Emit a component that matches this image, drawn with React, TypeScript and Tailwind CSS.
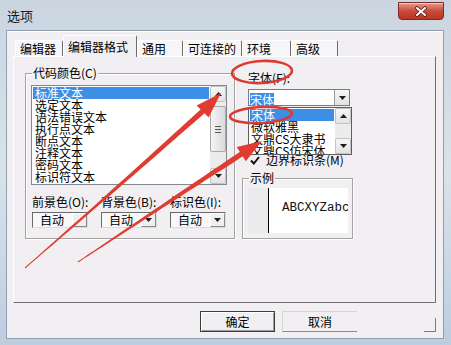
import React from "react";

type Pt = [number, number];

const BODY_BG = "bg-[#f1eff2]";

// tapered pen-drawn arrow: quadratic shaft from tail to head base, then a triangle head
function arrow(p0: Pt, c: Pt, base: Pt, tip: Pt, w0: number, w1: number, hw: number) {
  const n = 30;
  const left: Pt[] = [];
  const right: Pt[] = [];
  for (let i = 0; i <= n; i++) {
    const t = i / n;
    const x = (1 - t) * (1 - t) * p0[0] + 2 * (1 - t) * t * c[0] + t * t * base[0];
    const y = (1 - t) * (1 - t) * p0[1] + 2 * (1 - t) * t * c[1] + t * t * base[1];
    const dx = 2 * (1 - t) * (c[0] - p0[0]) + 2 * t * (base[0] - c[0]);
    const dy = 2 * (1 - t) * (c[1] - p0[1]) + 2 * t * (base[1] - c[1]);
    const len = Math.hypot(dx, dy);
    const w = (w0 + (w1 - w0) * t) / 2;
    left.push([x - (dy / len) * w, y + (dx / len) * w]);
    right.push([x + (dy / len) * w, y - (dx / len) * w]);
  }
  const hx = tip[0] - base[0];
  const hy = tip[1] - base[1];
  const hl = Math.hypot(hx, hy);
  const nx = -hy / hl;
  const ny = hx / hl;
  const back: Pt = [base[0] - (hx / hl) * 2, base[1] - (hy / hl) * 2];
  const head: Pt[] = [
    [back[0] + nx * hw, back[1] + ny * hw],
    tip,
    [back[0] - nx * hw, back[1] - ny * hw],
  ];
  const fmt = (ps: Pt[]) => ps.map((p) => `${p[0].toFixed(1)},${p[1].toFixed(1)}`).join(" ");
  return { shaft: fmt([...left, ...right.reverse()]), head: fmt(head) };
}

const arrow1 = arrow([25, 268], [126, 180], [204, 110], [221, 93], 1, 5.5, 8.5);
const arrow2 = arrow([78, 262], [161, 207], [243, 153], [262, 141], 1, 5.5, 8.5);

const tabs = [
  { label: "编辑器", w: "w-[48px]" },
  { label: "编辑器格式", w: "w-[74px]", active: true },
  { label: "通用", w: "w-[46px]" },
  { label: "可连接的", w: "w-[59px]" },
  { label: "环境", w: "w-[49px]" },
  { label: "高级", w: "w-[47px]" },
];

const items = ["标准文本", "选定文本", "语法错误文本", "执行点文本", "断点文本", "注释文本", "密码文本", "标识符文本"];
const fonts = ["宋体", "微软雅黑", "文鼎CS大隶书", "文鼎CS仿宋体"];

function Tri({ up }: { up?: boolean }) {
  return (
    <svg width="7" height="4" viewBox="0 0 7 4">
      <path d={up ? "M0 4h7L3.5 0z" : "M0 0h7L3.5 4z"} fill="#1e1e1e" />
    </svg>
  );
}

function ScrollBtn({ up }: { up?: boolean }) {
  return (
    <div className="h-[16px] flex items-center justify-center rounded-[2px] border border-[#c3c3c3] bg-linear-to-b from-[#f6f6f6] to-[#e3e3e3]">
      <Tri up={up} />
    </div>
  );
}

function ColorCombo({ arrow = true }: { arrow?: boolean }) {
  return (
    <div className="h-[16px] flex border-t border-l border-[#6a6a6a] border-r border-b border-r-[#dcdcdc] border-b-[#dcdcdc] bg-[#f8f7f9]">
      <div className="flex-1 pl-[7px] leading-[14px]">自动</div>
      <div className="w-[15px] flex items-center justify-center border-l border-t border-l-white border-t-white border-r border-b border-r-[#8a8a8a] border-b-[#8a8a8a] bg-[#efeef0]">
        {arrow && <Tri />}
      </div>
    </div>
  );
}

export default function App() {
  return (
    <div className="relative w-[451px] h-[345px] overflow-hidden bg-linear-to-b from-[#cbd5e0] via-[#dae2ea] to-[#bccde0] text-[12px] text-black font-['Noto_Sans_CJK_SC','Noto_Sans',sans-serif]">
      {/* title bar */}
      <div className="h-[30px] flex items-start justify-between">
        <span className="ml-[7px] mt-[8px] text-[13px] leading-[15px] text-[#1a1a1a]">选项</span>
        <div className="mt-[2px] mr-[7px] w-[46px] h-[18px] rounded-b-[4px] border border-[#7d2a23] bg-linear-to-b from-[#e39a8e] via-[#c94a3b] to-[#b9351f] flex items-center justify-center shadow-[inset_0_1px_0_rgba(255,255,255,0.5)]">
          <svg width="14" height="11" viewBox="0 0 14 11">
            <path d="M3 2 L11 9 M11 2 L3 9" stroke="#5b1c14" strokeWidth="3.6" strokeLinecap="round" />
            <path d="M3 2 L11 9 M11 2 L3 9" stroke="#ffffff" strokeWidth="2" strokeLinecap="round" />
          </svg>
        </div>
      </div>

      {/* dialog body */}
      <div className={`ml-[6px] w-[438px] h-[309px] border border-[#8fa0b3] ${BODY_BG} flex flex-col shadow-[inset_0_1px_0_#ffffff]`}>
        <div className="h-[25px] flex items-end pl-[8px]">
          {tabs.map((t) =>
            t.active ? (
              <div
                key={t.label}
                className={`${t.w} h-[22px] -mb-[1px] relative z-10 ${BODY_BG} border-t border-l border-white border-r border-r-[#6b6b6b] rounded-t-[2px] pl-[4px] pt-[4px] leading-[14px]`}
              >
                {t.label}
              </div>
            ) : (
              <div
                key={t.label}
                className={`${t.w} h-[16px] bg-[#f6f5f7] border-t border-l border-white border-r border-r-[#6b6b6b] rounded-t-[2px] pl-[4px] flex items-center leading-[14px]`}
              >
                {t.label}
              </div>
            )
          )}
        </div>

        {/* tab panel */}
        <div className="ml-[6px] w-[423px] h-[247px] border-t border-l border-white border-r border-b border-r-[#6f6f6f] border-b-[#6f6f6f] flex items-start">
          {/* code colours group */}
          <div className="ml-[11px] mt-[16px] w-[210px] h-[166px] border border-[#a2a2a2] shadow-[inset_1px_1px_0_#ffffff,1px_1px_0_#ffffff] flex flex-col">
            <div className={`ml-[6px] -mt-[8px] px-[1px] w-fit ${BODY_BG} leading-[14px]`}>代码颜色(C)</div>
            <div className="mt-[5px] ml-[5px] w-[196px] h-[100px] border border-[#828790] bg-white flex">
              <div className="flex-1 pt-[1px] px-[1px] overflow-hidden">
                {items.map((it, i) => (
                  <div
                    key={it}
                    className={`h-[12px] leading-[12px] pl-[2px] whitespace-nowrap ${i === 0 ? "bg-[#3d8fe6] text-white" : ""}`}
                  >
                    {it}
                  </div>
                ))}
              </div>
              <div className="w-[16px] flex flex-col bg-[#ececec]">
                <ScrollBtn up />
                <div className="mt-[4px] h-[46px] rounded-[2px] border border-[#a9a9a9] bg-linear-to-r from-[#f4f4f4] to-[#dadada] flex flex-col items-center justify-center gap-[2px]">
                  <div className="w-[6px] h-[1px] bg-[#555]" />
                  <div className="w-[6px] h-[1px] bg-[#555]" />
                  <div className="w-[6px] h-[1px] bg-[#555]" />
                </div>
                <div className="flex-1" />
                <ScrollBtn />
              </div>
            </div>
            <div className="mt-[10px] ml-[6px] grid grid-cols-[56px_56px_56px] gap-x-[13px] leading-[14px] whitespace-nowrap">
              <span>前景色(O):</span>
              <span>背景色(B):</span>
              <span>标识色(I):</span>
            </div>
            <div className="mt-[3px] ml-[6px] grid grid-cols-[56px_56px_56px] gap-x-[13px]">
              <ColorCombo arrow={false} />
              <ColorCombo />
              <ColorCombo />
            </div>
          </div>

          {/* font column */}
          <div className="ml-[7px] w-[111px] flex flex-col">
            <div className="mt-[14px] ml-[6px] leading-[14px]">字体(F):</div>
            <div className="mt-[4px] ml-[6px] w-[102px] h-[17px] border border-[#7a7a7a] bg-white flex">
              <div className="flex-1 pl-[1px] pt-[1px]">
                <span className="inline-block bg-[#3d8fe6] text-white leading-[13px]">宋体</span>
              </div>
              <div className="w-[15px] flex items-center justify-center border-l border-[#9a9a9a] bg-linear-to-b from-[#f6f6f6] to-[#e2e2e2]">
                <Tri />
              </div>
            </div>
            <div className="mt-[47px] ml-[8px] h-[14px] flex items-center gap-[6px] leading-[14px] whitespace-nowrap">
              <svg width="10" height="9" viewBox="0 0 10 9">
                <path d="M1 4.5 L3.8 7.5 L9 1" stroke="#111" strokeWidth="2" fill="none" />
              </svg>
              <span>边界标识条(M)</span>
            </div>
            <div className="mt-[11px] w-[111px] h-[61px] border border-[#a2a2a2] shadow-[inset_1px_1px_0_#ffffff,1px_1px_0_#ffffff] flex flex-col">
              <div className={`ml-[6px] -mt-[8px] px-[1px] w-fit ${BODY_BG} leading-[14px]`}>示例</div>
              <div className="mt-[3px] ml-[5px] w-[100px] h-[45px] flex overflow-hidden">
                <div className="w-[21px] shrink-0 bg-[#ebeaec] border-r-[1.5px] border-black" />
                <div className="flex-1 bg-white flex items-center pl-[13px] pb-[4px] whitespace-nowrap overflow-hidden font-['Liberation_Mono',monospace] text-[12.5px] text-[#111]">
                  ABCXYZabc:
                </div>
              </div>
            </div>
          </div>
        </div>

        {/* dialog buttons */}
        <div className="mt-[8px] flex">
          <div className="ml-[193px] w-[75px] h-[21px] border border-[#3c3c3c] bg-[#f0eff1] shadow-[inset_1px_1px_0_#ffffff,inset_-1px_-1px_0_#9c9c9c] flex items-center justify-center leading-[14px]">
            确定
          </div>
          <div className="ml-[7px] w-[75px] h-[21px] border-t border-l border-[#d4d4d4] border-b border-b-[#8a8a8a] flex items-center justify-center leading-[14px]">
            取消
          </div>
          <div className="ml-[4px] w-[75px] h-[21px] flex items-end justify-end">
            <div className="w-[12px] h-[14px] border-r border-b border-[#7c7c7c]" />
          </div>
        </div>
      </div>

      {/* open font dropdown */}
      <div className="absolute left-[248px] top-[107px] w-[104px] h-[48px] border border-[#5e5e5e] bg-white flex z-10">
        <div className="flex-1 pt-[1px] px-[1px] overflow-hidden">
          {fonts.map((f, i) => (
            <div key={f} className={`h-[12px] leading-[12px] pl-[1px] whitespace-nowrap ${i === 0 ? "bg-[#3d8fe6] text-white" : ""}`}>
              {f}
            </div>
          ))}
        </div>
        <div className="w-[16px] flex flex-col justify-between bg-[#ececec]">
          <ScrollBtn up />
          <ScrollBtn />
        </div>
      </div>

      {/* red annotations */}
      <svg className="absolute inset-0 z-20 pointer-events-none" width="451" height="345" viewBox="0 0 451 345">
        <ellipse cx="262" cy="72" rx="30" ry="11" fill="none" stroke="#dc3a30" strokeWidth="2.6" transform="rotate(-3 262 72)" />
        <ellipse cx="261" cy="115" rx="31" ry="8" fill="none" stroke="#dc3a30" strokeWidth="2.6" transform="rotate(-3 261 115)" />
        <polygon points={arrow1.shaft} fill="#e03c31" />
        <polygon points={arrow1.head} fill="#e03c31" />
        <polygon points={arrow2.shaft} fill="#e03c31" />
        <polygon points={arrow2.head} fill="#e03c31" />
      </svg>
    </div>
  );
}
